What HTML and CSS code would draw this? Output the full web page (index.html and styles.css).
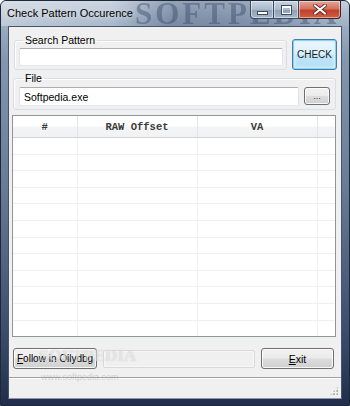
FILE: index.html
```html
<!DOCTYPE html>
<html>
<head>
    <title>Check Pattern Occurence</title>
    <link rel="stylesheet" href="styles.css">
</head>
<body>
    <div class="window">
        <div class="titlebar">
            <span class="title">Check Pattern Occurence</span>
            <span class="watermark-top">SOFTPEDIA</span>
            <div class="caption-buttons">
                <div class="cap-btn cap-min"><span class="min-bar"></span></div>
                <div class="cap-btn cap-max"><span class="max-box"></span></div>
                <div class="cap-btn cap-close">
                    <svg width="14" height="11" viewBox="0 0 14 11">
                        <path d="M2 1.5 L12 9.5 M12 1.5 L2 9.5" stroke="#5a2020" stroke-width="3.6" stroke-linecap="round"/>
                        <path d="M2 1.5 L12 9.5 M12 1.5 L2 9.5" stroke="#fff" stroke-width="2.2" stroke-linecap="round"/>
                    </svg>
                </div>
            </div>
        </div>

        <div class="client">
            <div class="search-row">
                <fieldset class="group search-group">
                    <legend>Search Pattern</legend>
                    <input class="textbox search-input" type="text" value="">
                </fieldset>
                <button class="btn btn-check">CHECK</button>
            </div>

            <fieldset class="group file-group">
                <legend>File</legend>
                <div class="file-row">
                    <input class="textbox file-input" type="text" value="Softpedia.exe">
                    <button class="btn btn-browse">...</button>
                </div>
            </fieldset>

            <div class="list">
                <table>
                    <colgroup>
                        <col style="width: 64px">
                        <col style="width: 120px">
                        <col style="width: 120px">
                        <col>
                    </colgroup>
                    <thead>
                        <tr><th>#</th><th>RAW Offset</th><th>VA</th><th></th></tr>
                    </thead>
                    <tbody id="rows"></tbody>
                </table>
            </div>

            <div class="bottom-row">
                <button class="btn btn-follow"><u>F</u>ollow in Ollydbg</button>
                <div class="address-box"></div>
                <button class="btn btn-exit"><u>E</u>xit</button>
            </div>

            <div class="statusbar">
                <span class="grip"></span>
            </div>

            <span class="watermark-bottom">SOFTPEDIA</span>
            <span class="watermark-url">www.softpedia.com</span>
        </div>
    </div>

    <script>
        // empty result rows
        const rows = document.getElementById('rows');
        for (let i = 0; i < 12; i++) {
            const tr = document.createElement('tr');
            for (let c = 0; c < 4; c++) {
                tr.appendChild(document.createElement('td'));
            }
            rows.appendChild(tr);
        }
    </script>
</body>
</html>
```

FILE: styles.css
```css
body {
    margin: 0;
    background-color: #fff;
    font-family: "Liberation Sans", Arial, sans-serif;
}
.window {
    position: relative;
    width: 350px;
    height: 406px;
    box-sizing: border-box;
    border: 1px solid #1d2838;
    border-radius: 6px 6px 0 0;
    overflow: hidden;
    background: linear-gradient(to bottom, #c3cedb 0px, #9fb0c4 20px, #8396ae 60px, #6a7d98 180px, #3c4d6b 330px, #1f2d4a 406px);
}
.titlebar {
    position: relative;
    height: 25px;
    display: flex;
    justify-content: space-between;
    align-items: flex-start;
    background: linear-gradient(to right, rgba(255,255,255,0.35) 0px, rgba(255,255,255,0.15) 110px, rgba(40,60,95,0.3) 170px, rgba(40,60,95,0.25) 260px, rgba(255,255,255,0.05) 340px);
}
.title {
    padding: 6px 0 0 6px;
    font-size: 11px;
    line-height: 13px;
    color: #000;
    text-shadow: 0 0 6px rgba(255,255,255,0.9);
    z-index: 1;
}
.watermark-top {
    position: absolute;
    left: 134px;
    top: -5px;
    font-family: "Liberation Serif", serif;
    font-weight: bold;
    font-size: 31px;
    letter-spacing: 3px;
    color: rgba(45,65,100,0.4);
    filter: blur(0.7px);
}
.caption-buttons {
    display: flex;
    margin-right: 8px;
    z-index: 1;
}
.cap-btn {
    height: 17px;
    border: 1px solid #3b4a5e;
    border-top: none;
    display: flex;
    align-items: center;
    justify-content: center;
    box-shadow: inset 0 0 0 1px rgba(255,255,255,0.45);
}
.cap-min {
    width: 22px;
    border-radius: 0 0 0 4px;
    background: linear-gradient(to bottom, #c9d4e0 0%, #a9b8c9 50%, #8ea0b6 51%, #a4b6ca 100%);
}
.cap-max {
    width: 24px;
    border-left: none;
    background: linear-gradient(to bottom, #c9d4e0 0%, #a9b8c9 50%, #8ea0b6 51%, #a4b6ca 100%);
}
.cap-close {
    width: 41px;
    border-left: none;
    border-color: #4a1f1f;
    border-radius: 0 0 4px 0;
    background: linear-gradient(to bottom, #e8a595 0%, #d27362 45%, #c0402c 55%, #d0623f 100%);
}
.min-bar {
    width: 9px;
    height: 2px;
    margin-top: 6px;
    background-color: #fff;
    border: 1px solid #3d4a5c;
}
.max-box {
    width: 7px;
    height: 5px;
    border: 1px solid #fff;
    border-top-width: 2px;
    outline: 1px solid #3d4a5c;
}
.client {
    position: relative;
    margin: 0 7px;
    height: 371px;
    border: 1px solid #45546b;
    border-bottom-color: #8a98ab;
    background-color: #f0f0f0;
    display: flex;
    flex-direction: column;
}
.search-row {
    display: flex;
    align-items: flex-end;
    margin: 7px 4px 0 5px;
}
.group {
    margin: 0;
    border: 1px solid #d5dfe5;
    border-radius: 3px;
    box-shadow: inset 1px 1px 0 #fff;
    min-width: 0;
}
.group legend {
    padding: 0 2px;
    margin-left: 4px;
    font-size: 10.5px;
    line-height: 12px;
    color: #000;
}
.search-group {
    width: 273px;
    box-sizing: border-box;
    padding: 2px 3px 3px 4px;
}
.textbox {
    display: block;
    box-sizing: border-box;
    height: 18px;
    margin: 0;
    padding: 0 4px;
    border: 1px solid #e2e3ea;
    border-top-color: #abadb3;
    border-bottom-color: #e3e9ef;
    border-radius: 2px;
    background-color: #fff;
    font-family: "Liberation Sans", Arial, sans-serif;
    font-size: 10.5px;
    color: #000;
}
.search-input {
    width: 100%;
}
.btn {
    box-sizing: border-box;
    margin: 0;
    padding: 0;
    border: 1px solid #707070;
    border-radius: 3px;
    background: linear-gradient(to bottom, #f2f2f2 0%, #ebebeb 48%, #dddddd 52%, #cfcfcf 100%);
    box-shadow: inset 0 0 0 1px rgba(255,255,255,0.8);
    font-family: "Liberation Sans", Arial, sans-serif;
    font-size: 10.5px;
    color: #000;
    white-space: nowrap;
}
.btn-check {
    width: 45px;
    height: 31px;
    margin-left: 5px;
    border-color: #3c7fb1;
    background: linear-gradient(to bottom, #ecf8fe 0%, #dcf1fc 48%, #c2e6f9 52%, #b0ddf4 100%);
    box-shadow: inset 0 0 0 1px #8fd0ee, inset 0 0 3px 2px #d8f1fd;
    font-size: 10px;
    color: #1a1a1a;
}
.file-group {
    margin: 2px 5px 0 4px;
    padding: 0 5px 3px 5px;
}
.file-row {
    display: flex;
    align-items: flex-start;
    margin-top: 3px;
}
.file-input {
    flex: 1;
    height: 19px;
}
.btn-browse {
    width: 26px;
    height: 18px;
    margin-left: 5px;
    font-size: 9px;
    color: #333;
    line-height: 10px;
}
.list {
    margin: 5px 5px 0 3px;
    height: 222px;
    box-sizing: border-box;
    border: 1px solid #8f959b;
    background-color: #fff;
    overflow: hidden;
}
.list table {
    width: 100%;
    table-layout: fixed;
    border-collapse: collapse;
}
.list th {
    height: 21px;
    padding: 0;
    border-left: 1px solid #e3e6ea;
    border-bottom: 1px solid #d5d5d5;
    background: linear-gradient(to bottom, #ffffff 0%, #ffffff 45%, #f3f4f6 55%, #f1f2f4 100%);
    font-family: "Liberation Mono", "Courier New", monospace;
    font-weight: bold;
    font-size: 10.5px;
    color: #3a3a3a;
    text-align: center;
}
.list th:first-child {
    border-left: none;
}
.list td {
    height: 15.6px;
    padding: 0;
    border-left: 1px solid #f0f0f0;
    border-bottom: 1px solid #f0f0f0;
}
.list td:first-child {
    border-left: none;
}
.bottom-row {
    display: flex;
    align-items: center;
    margin: 11px 7px 0 4px;
}
.btn-follow {
    width: 84px;
    height: 21px;
    font-size: 10px;
    text-align: left;
    padding-left: 3px;
}
.address-box {
    width: 152px;
    height: 18px;
    box-sizing: border-box;
    margin-left: 6px;
    border: 1px solid #d9d9d9;
    border-radius: 2px;
    background-color: #f0f0f0;
    box-shadow: inset 0 0 0 1px #f7f7f7;
}
.btn-exit {
    width: 73px;
    height: 21px;
    margin-left: auto;
}
.statusbar {
    margin-top: auto;
    height: 20px;
    border-top: 1px solid #a0a0a0;
    box-shadow: inset 0 1px 0 #fff;
    background-color: #f0f0f0;
    position: relative;
}
.grip {
    position: absolute;
    right: 2px;
    bottom: 2px;
    width: 10px;
    height: 10px;
    background-image: radial-gradient(circle, #a0a8b0 0.8px, transparent 1.2px);
    background-size: 3.3px 3.3px;
    clip-path: polygon(100% 0, 100% 100%, 0 100%);
}
.watermark-bottom {
    position: absolute;
    left: 30px;
    top: 319px;
    font-family: "Liberation Serif", serif;
    font-weight: bold;
    font-size: 17px;
    color: rgba(255,255,255,0.5);
    text-shadow: 0 0 1px rgba(100,100,100,0.3);
    pointer-events: none;
}
.watermark-url {
    position: absolute;
    left: 32px;
    top: 345px;
    font-size: 9px;
    color: rgba(150,150,150,0.4);
    pointer-events: none;
}
```
